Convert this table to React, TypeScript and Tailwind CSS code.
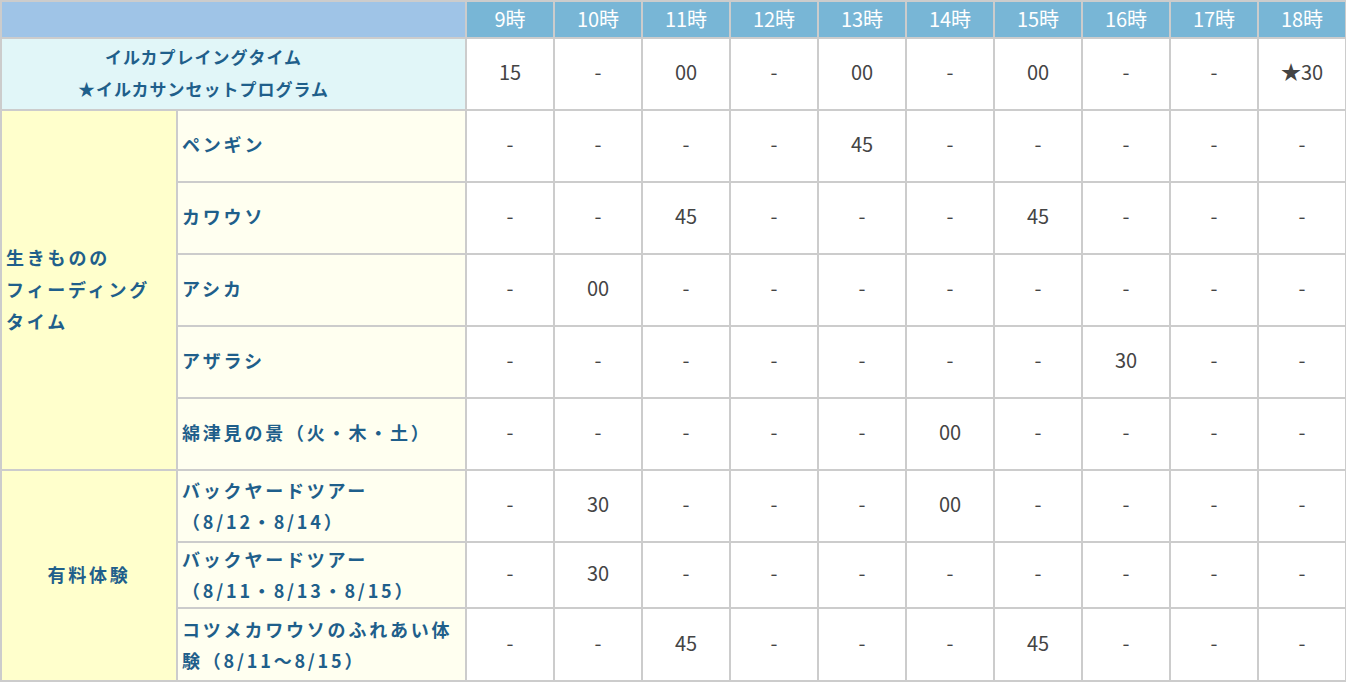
import React from "react";

const hours = ["9時", "10時", "11時", "12時", "13時", "14時", "15時", "16時", "17時", "18時"];

type Row = { label: React.ReactNode; cells: string[]; h: string };

const feeding: Row[] = [
  { label: "ペンギン", cells: ["-", "-", "-", "-", "45", "-", "-", "-", "-", "-"], h: "h-[72px]" },
  { label: "カワウソ", cells: ["-", "-", "45", "-", "-", "-", "45", "-", "-", "-"], h: "h-[72px]" },
  { label: "アシカ", cells: ["-", "00", "-", "-", "-", "-", "-", "-", "-", "-"], h: "h-[72px]" },
  { label: "アザラシ", cells: ["-", "-", "-", "-", "-", "-", "-", "30", "-", "-"], h: "h-[72px]" },
  { label: "綿津見の景（火・木・土）", cells: ["-", "-", "-", "-", "-", "00", "-", "-", "-", "-"], h: "h-[72px]" },
];

const paid: Row[] = [
  {
    label: (
      <>
        バックヤードツアー
        <br />
        （8/12・8/14）
      </>
    ),
    cells: ["-", "30", "-", "-", "-", "00", "-", "-", "-", "-"],
    h: "h-[72px]",
  },
  {
    label: (
      <>
        バックヤードツアー
        <br />
        （8/11・8/13・8/15）
      </>
    ),
    cells: ["-", "30", "-", "-", "-", "-", "-", "-", "-", "-"],
    h: "h-[66px]",
  },
  {
    label: (
      <>
        コツメカワウソのふれあい体
        <br />
        験（8/11～8/15）
      </>
    ),
    cells: ["-", "-", "45", "-", "-", "-", "45", "-", "-", "-"],
    h: "h-[73px]",
  },
];

const cellCls =
  "border-2 border-[#cccccc] bg-white pb-[4px] text-center align-middle text-[20px] text-[#444444]";
const subCls =
  "border-2 border-[#cccccc] bg-[#fffff0] text-left align-middle pl-[4px] text-[18px] font-bold tracking-[2.8px] leading-[31px] text-[#1f5f8b]";
const catCls =
  "border-2 border-[#cccccc] bg-[#ffffcc] pb-[3px] align-middle text-[18px] font-bold tracking-[2.8px] leading-[32px] text-[#1f5f8b]";

function DataCells({ cells }: { cells: string[] }) {
  return (
    <>
      {cells.map((c, i) => (
        <td key={i} className={cellCls}>
          {c}
        </td>
      ))}
    </>
  );
}

export default function App() {
  return (
    <div
      className="w-[1346px] bg-white"
      style={{ fontFamily: '"Noto Sans CJK JP", "Noto Sans", sans-serif' }}
    >
      <table className="w-[1346px] table-fixed border-collapse">
        <colgroup>
          <col className="w-[176px]" />
          <col className="w-[289px]" />
          {hours.map((h) => (
            <col key={h} className="w-[88px]" />
          ))}
        </colgroup>
        <tbody>
          <tr className="h-[37px]">
            <td colSpan={2} className="border-2 border-[#cccccc] bg-[#9fc4e7]"></td>
            {hours.map((h) => (
              <td
                key={h}
                className="border-2 border-[#cccccc] bg-[#78b6d6] pb-[2px] text-center align-middle text-[20px] text-white"
              >
                {h}
              </td>
            ))}
          </tr>
          <tr className="h-[72px]">
            <td
              colSpan={2}
              className="border-2 border-[#cccccc] bg-[#e1f6f8] pr-[60px] pb-[3px] text-center align-middle text-[17px] font-bold tracking-[1px] leading-[32px] text-[#1f5f8b]"
            >
              イルカプレイングタイム
              <br />
              ★イルカサンセットプログラム
            </td>
            <DataCells cells={["15", "-", "00", "-", "00", "-", "00", "-", "-", "★30"]} />
          </tr>
          {feeding.map((r, i) => (
            <tr key={i} className={r.h}>
              {i === 0 && (
                <td rowSpan={5} className={catCls + " text-left pl-[4px]"}>
                  生きものの
                  <br />
                  フィーディング
                  <br />
                  タイム
                </td>
              )}
              <td className={subCls + " pb-[4px]"}>{r.label}</td>
              <DataCells cells={r.cells} />
            </tr>
          ))}
          {paid.map((r, i) => (
            <tr key={i} className={r.h}>
              {i === 0 && (
                <td rowSpan={3} className={catCls + " text-center"}>
                  有料体験
                </td>
              )}
              <td className={subCls}>{r.label}</td>
              <DataCells cells={r.cells} />
            </tr>
          ))}
        </tbody>
      </table>
    </div>
  );
}
